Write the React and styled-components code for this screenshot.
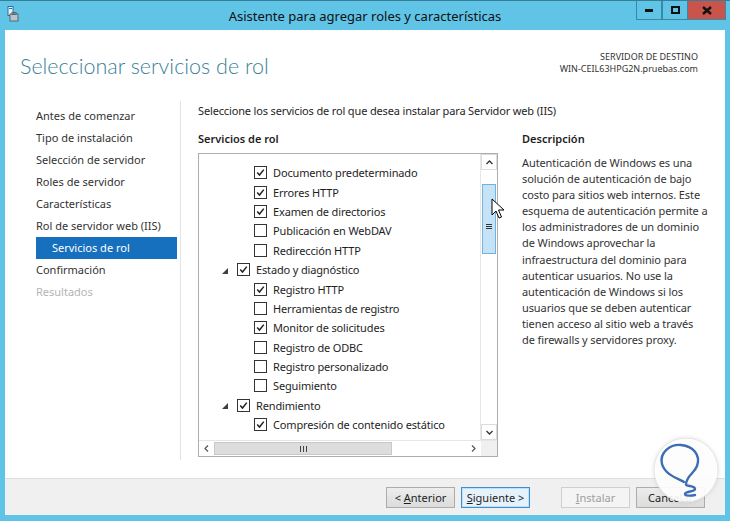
import React from 'react';
import styled, { createGlobalStyle } from 'styled-components';

const GlobalStyle = createGlobalStyle`
  html, body {
    margin: 0;
    padding: 0;
    background: #ffffff;
  }
  body {
    font-family: 'Noto Sans', 'Open Sans', sans-serif;
    color: #1e1e1e;
  }
`;

const navItems = [
  { label: 'Antes de comenzar' },
  { label: 'Tipo de instalación' },
  { label: 'Selección de servidor' },
  { label: 'Roles de servidor' },
  { label: 'Características' },
  { label: 'Rol de servidor web (IIS)' },
  { label: 'Servicios de rol', active: true, sub: true },
  { label: 'Confirmación' },
  { label: 'Resultados', disabled: true },
];

const treeItems = [
  { label: 'Documento predeterminado', checked: true, level: 2 },
  { label: 'Errores HTTP', checked: true, level: 2 },
  { label: 'Examen de directorios', checked: true, level: 2 },
  { label: 'Publicación en WebDAV', checked: false, level: 2 },
  { label: 'Redirección HTTP', checked: false, level: 2 },
  { label: 'Estado y diagnóstico', checked: true, level: 1 },
  { label: 'Registro HTTP', checked: true, level: 2 },
  { label: 'Herramientas de registro', checked: false, level: 2 },
  { label: 'Monitor de solicitudes', checked: true, level: 2 },
  { label: 'Registro de ODBC', checked: false, level: 2 },
  { label: 'Registro personalizado', checked: false, level: 2 },
  { label: 'Seguimiento', checked: false, level: 2 },
  { label: 'Rendimiento', checked: true, level: 1 },
  { label: 'Compresión de contenido estático', checked: true, level: 2 },
];

const descLines = [
  'Autenticación de Windows es una',
  'solución de autenticación de bajo',
  'costo para sitios web internos. Este',
  'esquema de autenticación permite a',
  'los administradores de un dominio',
  'de Windows aprovechar la',
  'infraestructura del dominio para',
  'autenticar usuarios. No use la',
  'autenticación de Windows si los',
  'usuarios que se deben autenticar',
  'tienen acceso al sitio web a través',
  'de firewalls y servidores proxy.',
];

const App = () => {
  return (
    <>
      <GlobalStyle />
      <Window>
        <TitleBar>
          <TitleLeft>
            <svg width="12" height="16" viewBox="0 0 12 16">
              <rect x="1" y="0.5" width="5" height="9" fill="#e8f4fb" stroke="#2f6e9e" />
              <rect x="2" y="2" width="3" height="1" fill="#2f6e9e" />
              <rect x="3" y="8" width="8" height="7" fill="#b9c4cc" stroke="#5b6770" />
              <rect x="5" y="6.5" width="4" height="2" fill="none" stroke="#5b6770" />
            </svg>
          </TitleLeft>
          <Title>Asistente para agregar roles y características</Title>
          <TitleRight>
            <WinButton>
              <svg width="8" height="3"><rect width="8" height="3" fill="#111" /></svg>
            </WinButton>
            <WinButton>
              <svg width="9" height="8"><rect x="1" y="1" width="7" height="6" fill="none" stroke="#111" strokeWidth="2" /></svg>
            </WinButton>
            <WinButton $close>
              <svg width="10" height="9" viewBox="0 0 10 9">
                <path d="M1 1 L9 8 M9 1 L1 8" stroke="#111" strokeWidth="2.4" />
              </svg>
            </WinButton>
          </TitleRight>
        </TitleBar>

        <Body>
          <Header>
            <Heading>Seleccionar servicios de rol</Heading>
            <Target>
              <span>SERVIDOR DE DESTINO</span>
              <span>WIN-CEIL63HPG2N.pruebas.com</span>
            </Target>
          </Header>

          <Main>
            <Nav>
              {navItems.map((item) => (
                <NavItem
                  key={item.label}
                  $active={item.active}
                  $sub={item.sub}
                  $disabled={item.disabled}
                >
                  {item.label}
                </NavItem>
              ))}
            </Nav>
            <Divider />
            <Content>
              <Intro>Seleccione los servicios de rol que desea instalar para Servidor web (IIS)</Intro>
              <Columns>
                <div>
                  <SectionTitle>Servicios de rol</SectionTitle>
                  <ListBox>
                    <ListArea>
                      <TreeList>
                        {treeItems.map((item) => (
                          <TreeRow key={item.label} $level={item.level}>
                            {item.level === 1 && (
                              <Expander>
                                <svg width="6" height="6" viewBox="0 0 6 6">
                                  <path d="M6 0 L6 6 L0 6 Z" fill="#404040" />
                                </svg>
                              </Expander>
                            )}
                            <CheckBox>
                              {item.checked && (
                                <svg width="11" height="11" viewBox="0 0 11 11">
                                  <path d="M2.2 5.6 L4.5 8 L8.8 2.6" fill="none" stroke="#222" strokeWidth="1.5" />
                                </svg>
                              )}
                            </CheckBox>
                            <span>{item.label}</span>
                          </TreeRow>
                        ))}
                      </TreeList>
                      <VScroll>
                        <ArrowBox>
                          <svg width="7" height="5" viewBox="0 0 7 5"><path d="M0.5 4 L3.5 1 L6.5 4" fill="none" stroke="#333" strokeWidth="1.3" /></svg>
                        </ArrowBox>
                        <VTrack>
                          <VThumb>
                            <svg width="6" height="6" viewBox="0 0 6 6">
                              <rect y="0" width="6" height="1" fill="#333" />
                              <rect y="2" width="6" height="1" fill="#333" />
                              <rect y="4" width="6" height="1" fill="#333" />
                            </svg>
                          </VThumb>
                        </VTrack>
                        <ArrowBox>
                          <svg width="7" height="5" viewBox="0 0 7 5"><path d="M0.5 1 L3.5 4 L6.5 1" fill="none" stroke="#333" strokeWidth="1.3" /></svg>
                        </ArrowBox>
                      </VScroll>
                    </ListArea>
                    <HScroll>
                      <HArrow>
                        <svg width="5" height="7" viewBox="0 0 5 7"><path d="M4 0.5 L1 3.5 L4 6.5" fill="none" stroke="#555" strokeWidth="1.2" /></svg>
                      </HArrow>
                      <HTrack>
                        <HThumb>
                          <svg width="7" height="6" viewBox="0 0 7 6">
                            <rect x="0" width="1" height="6" fill="#444" />
                            <rect x="3" width="1" height="6" fill="#444" />
                            <rect x="6" width="1" height="6" fill="#444" />
                          </svg>
                        </HThumb>
                      </HTrack>
                      <HArrow>
                        <svg width="5" height="7" viewBox="0 0 5 7"><path d="M1 0.5 L4 3.5 L1 6.5" fill="none" stroke="#555" strokeWidth="1.2" /></svg>
                      </HArrow>
                      <Corner />
                    </HScroll>
                    <Cursor>
                      <svg width="14" height="22" viewBox="0 0 14 22">
                        <path d="M1 1 L1 17 L5 13 L8 20 L10.5 19 L7.5 12 L13 12 Z" fill="#fff" stroke="#000" strokeWidth="1" strokeLinejoin="round" />
                      </svg>
                    </Cursor>
                  </ListBox>
                </div>
                <Description>
                  <SectionTitle>Descripción</SectionTitle>
                  <DescText>
                    {descLines.map((line) => (
                      <DescLine key={line}>{line}</DescLine>
                    ))}
                  </DescText>
                </Description>
              </Columns>
            </Content>
          </Main>
        </Body>

        <Footer>
          <Button>&lt; <u>A</u>nterior</Button>
          <Button $focused><u>S</u>iguiente &gt;</Button>
          <Spacer />
          <Button $disabled><u>I</u>nstalar</Button>
          <Button>Cancelar</Button>
        </Footer>

        <Watermark>
          <svg width="70" height="70" viewBox="0 0 70 70">
            <circle cx="35" cy="35" r="32" fill="rgba(255,255,255,0.92)" stroke="#e4e4e4" strokeWidth="1" />
            <path
              d="M33 47 C28 44 14 40 11 29 C8 17 20 9 30 10 C42 11 50 20 46 31 C43 39 36 40 35 49 C34 52 44 50 44 54 C44 57 34 56 34 59 C34 61 40 61 44 60"
              fill="none"
              stroke="#3a6db3"
              strokeWidth="2.4"
              strokeLinecap="round"
              strokeLinejoin="round"
            />
          </svg>
        </Watermark>
      </Window>
    </>
  );
};

const Window = styled.div`
  position: relative;
  width: 730px;
  height: 521px;
  box-sizing: border-box;
  background: #5fc4e6;
  padding: 0 5px 6px 5px;
  display: flex;
  flex-direction: column;
  overflow: hidden;
  border-top: 1px solid #3a7d96;
`;

const TitleBar = styled.div`
  height: 29px;
  display: grid;
  grid-template-columns: 1fr auto 1fr;
  align-items: start;
  flex-shrink: 0;
`;

const TitleLeft = styled.div`
  padding: 5px 0 0 2px;
  display: flex;
`;

const Title = styled.div`
  font-family: 'Noto Sans', sans-serif;
  font-size: 13px;
  color: #111;
  padding-top: 6px;
`;

const TitleRight = styled.div`
  display: flex;
  justify-content: flex-end;
  margin-right: -1px;
`;

const WinButton = styled.div`
  width: ${(p) => (p.$close ? '38px' : '26px')};
  height: 19px;
  box-sizing: border-box;
  display: flex;
  align-items: center;
  justify-content: center;
  background: ${(p) => (p.$close ? '#c9544c' : 'transparent')};
  border: 1px solid #3c87a6;
  border-top: none;
  border-left-width: ${(p) => (p.$close ? '0' : '1px')};
`;

const Body = styled.div`
  flex: 1;
  background: #ffffff;
  display: flex;
  flex-direction: column;
  min-height: 0;
`;

const Header = styled.div`
  display: flex;
  justify-content: space-between;
  align-items: flex-start;
  padding: 22px 27px 0 15px;
  height: 71px;
  box-sizing: border-box;
`;

const Heading = styled.h1`
  margin: 0;
  font-family: 'Lato', 'Noto Sans', sans-serif;
  font-weight: 300;
  font-size: 21.5px;
  color: #3a7f96;
  margin-top: 1px;
`;

const Target = styled.div`
  display: flex;
  flex-direction: column;
  align-items: flex-end;
  font-size: 9px;
  line-height: 12px;
  color: #333;
  margin-top: -1px;
`;

const Main = styled.div`
  display: flex;
  padding-left: 31px;
  flex: 1;
  min-height: 0;
`;

const Nav = styled.div`
  width: 141px;
  padding-top: 4px;
  display: flex;
  flex-direction: column;
`;

const NavItem = styled.div`
  height: 22px;
  line-height: 22px;
  font-size: 11px;
  white-space: nowrap;
  padding-left: ${(p) => (p.$sub ? '16px' : '0')};
  color: ${(p) => (p.$active ? '#ffffff' : p.$disabled ? '#b4b4b4' : '#333')};
  background: ${(p) => (p.$active ? '#1670bd' : 'transparent')};
`;

const Divider = styled.div`
  width: 1px;
  background: #e3e3e3;
  margin: 0 17px 18px 3px;
`;

const Content = styled.div`
  display: flex;
  flex-direction: column;
`;

const Intro = styled.div`
  font-size: 11px;
  letter-spacing: -0.15px;
  color: #1e1e1e;
  line-height: 20px;
  white-space: nowrap;
`;

const Columns = styled.div`
  display: flex;
  gap: 24px;
  margin-top: 10px;
`;

const SectionTitle = styled.div`
  font-size: 11px;
  font-weight: 600;
  color: #1e1e1e;
  line-height: 16px;
  margin-bottom: 6px;
`;

const ListBox = styled.div`
  position: relative;
  width: 300px;
  height: 304px;
  box-sizing: border-box;
  border: 1px solid #adadad;
  display: flex;
  flex-direction: column;
`;

const ListArea = styled.div`
  flex: 1;
  display: flex;
  min-height: 0;
`;

const TreeList = styled.div`
  flex: 1;
  padding-top: 9px;
  overflow: hidden;
`;

const TreeRow = styled.div`
  height: 19.4px;
  display: flex;
  align-items: center;
  font-size: 11px;
  letter-spacing: -0.15px;
  color: #1e1e1e;
  white-space: nowrap;
  padding-left: ${(p) => (p.$level === 1 ? '23px' : '55px')};
`;

const Expander = styled.span`
  display: flex;
  width: 15px;
  padding-top: 2px;
`;

const CheckBox = styled.span`
  width: 13px;
  height: 13px;
  box-sizing: border-box;
  border: 1px solid #333;
  background: #fff;
  display: flex;
  align-items: center;
  justify-content: center;
  margin-right: 6px;
  flex-shrink: 0;
`;

const VScroll = styled.div`
  width: 16px;
  display: flex;
  flex-direction: column;
  border-left: 1px solid #e6e6e6;
  background: #fff;
`;

const ArrowBox = styled.div`
  height: 16px;
  display: flex;
  align-items: center;
  justify-content: center;
  border: 1px solid #dcdcdc;
  box-sizing: border-box;
`;

const VTrack = styled.div`
  flex: 1;
  padding-top: 14px;
`;

const VThumb = styled.div`
  height: 70px;
  margin: 0 1px;
  background: #c5e2f6;
  border: 1px solid #72b2e0;
  box-sizing: border-box;
  display: flex;
  align-items: center;
  justify-content: center;
  padding-top: 16px;
`;

const HScroll = styled.div`
  height: 15px;
  display: flex;
  border-top: 1px solid #e6e6e6;
  background: #fff;
`;

const HArrow = styled.div`
  width: 15px;
  display: flex;
  align-items: center;
  justify-content: center;
`;

const HTrack = styled.div`
  flex: 1;
  padding-right: 74px;
  display: flex;
`;

const HThumb = styled.div`
  flex: 1;
  background: #dddddd;
  border: 1px solid #c8c8c8;
  margin: 1px 0;
  display: flex;
  align-items: center;
  justify-content: center;
`;

const Corner = styled.div`
  width: 16px;
  background: #f0f0f0;
`;

const Cursor = styled.div`
  position: absolute;
  left: 292px;
  top: 44px;
  display: flex;
`;

const Description = styled.div`
  width: 180px;
`;

const DescText = styled.div`
  font-size: 11px;
  letter-spacing: -0.1px;
  line-height: 16.1px;
  color: #333;
  padding-top: 2px;
`;

const DescLine = styled.div`
  white-space: nowrap;
`;

const Footer = styled.div`
  height: 37px;
  flex-shrink: 0;
  background: #f0f0f0;
  border-top: 1px solid #dfdfdf;
  box-sizing: border-box;
  display: flex;
  align-items: center;
  gap: 6px;
  padding: 0 19px 0 381px;
`;

const Spacer = styled.div`
  width: 19px;
`;

const Button = styled.div`
  width: 69px;
  height: 21px;
  box-sizing: border-box;
  display: flex;
  align-items: center;
  justify-content: center;
  font-size: 11px;
  color: ${(p) => (p.$disabled ? '#9d9d9d' : '#1e1e1e')};
  background: ${(p) => (p.$disabled ? '#f4f4f4' : p.$focused ? '#e5f1fb' : 'linear-gradient(#ededed, #dcdcdc)')};
  border: 1px solid ${(p) => (p.$disabled ? '#cfcfcf' : p.$focused ? '#3c8fd0' : '#acacac')};
  box-shadow: ${(p) => (p.$focused ? 'inset 0 0 0 1px #bfe0f7' : 'none')};
  white-space: pre;

  u {
    text-decoration: underline;
  }
`;

const Watermark = styled.div`
  position: absolute;
  left: 651px;
  top: 434px;
  display: flex;
  filter: drop-shadow(0 0 2px rgba(0, 0, 0, 0.12));
`;

export default App;
